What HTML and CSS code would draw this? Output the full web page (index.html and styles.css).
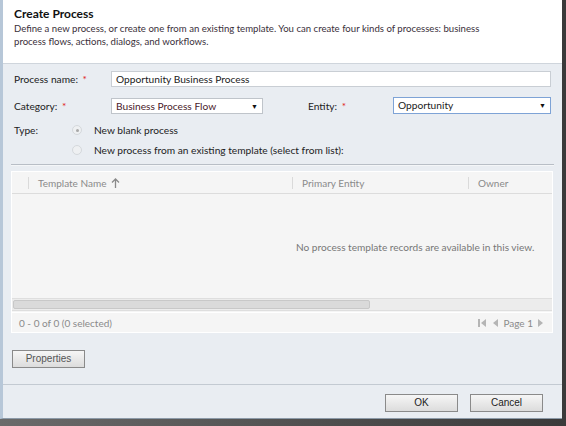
FILE: index.html
```html
<!DOCTYPE html>
<html>
<head>
<meta charset="utf-8">
<link rel="stylesheet" href="styles.css">
</head>
<body>
<div class="frame">
  <div class="dialog">
    <div class="header">
      <div class="title">Create Process</div>
      <div class="desc">Define a new process, or create one from an existing template. You can create four kinds of processes: business process flows, actions, dialogs, and workflows.</div>
    </div>
    <div class="body">
      <div class="row r-name">
        <div class="label">Process name: <span class="req">*</span></div>
        <div class="input wide">Opportunity Business Process</div>
      </div>
      <div class="row r-cat">
        <div class="label">Category: <span class="req">*</span></div>
        <div class="input select cat">Business Process Flow<span class="arrow">▼</span></div>
        <div class="label ent">Entity: <span class="req">*</span></div>
        <div class="input select entity">Opportunity<span class="arrow">▼</span></div>
      </div>
      <div class="row r-type">
        <div class="label">Type:</div>
        <div class="radio checked"></div>
        <div class="rtext">New blank process</div>
      </div>
      <div class="row r-type2">
        <div class="label"></div>
        <div class="radio"></div>
        <div class="rtext">New process from an existing template (select from list):</div>
      </div>
      <div class="sep"></div>
      <div class="grid">
        <div class="ghead">
          <div class="gcol c0"></div>
          <div class="gcol c1">Template Name <svg class="up" width="9" height="10" viewBox="0 0 9 10"><path d="M4.5 1 V10 M1 4.5 L4.5 1 L8 4.5" fill="none" stroke="#8a8a8a" stroke-width="1.3"/></svg></div>
          <div class="gcol c2">Primary Entity</div>
          <div class="gcol c3">Owner</div>
        </div>
        <div class="gbody">
          <div class="empty">No process template records are available in this view.</div>
        </div>
        <div class="hscroll"><div class="thumb"></div></div>
        <div class="gfoot">
          <div class="count">0 - 0 of 0 (0 selected)</div>
          <div class="pager">
            <svg width="10" height="10" viewBox="0 0 10 10"><rect x="1" y="1" width="2" height="8" fill="#b5b5b5"/><path d="M9 1 L4 5 L9 9 Z" fill="#b5b5b5"/></svg>
            <svg width="8" height="10" viewBox="0 0 8 10"><path d="M7 1 L2 5 L7 9 Z" fill="#b5b5b5"/></svg>
            <span class="page">Page 1</span>
            <svg width="8" height="10" viewBox="0 0 8 10"><path d="M1 1 L6 5 L1 9 Z" fill="#b5b5b5"/></svg>
          </div>
        </div>
      </div>
      <div class="props"><div class="btn small">Properties</div></div>
    </div>
    <div class="footer">
      <div class="btn">OK</div>
      <div class="btn">Cancel</div>
    </div>
  </div>
</div>
</body>
</html>
```
FILE: styles.css
```css
html, body { margin: 0; padding: 0; }
body { width: 566px; height: 426px; background: #5a5a5a; overflow: hidden; font-family: Lato, "Open Sans", sans-serif; }
.frame { width: 566px; height: 426px; background: linear-gradient(90deg, #6a6a6a, #3a3a3a); }
.dialog { width: 559px; height: 418px; background: #e9edf2; border-left: 3px solid #b7c7d8; border-bottom: 1px solid #8c9aa8; display: flex; flex-direction: column; box-sizing: content-box; }
.header { background: #fff; height: 64px; flex: none; border-bottom: 1px solid #cfd5dc; padding: 6px 0 0 11px; box-sizing: border-box; }
.title { font-weight: bold; font-size: 12px; color: #111; line-height: 15px; }
.desc { font-size: 9.6px; color: #3a2f3a; line-height: 12.5px; margin-top: 2px; width: 470px; }
.body { height: 321px; flex: none; padding: 0 8px; border-bottom: 1px solid #c3cad2; box-sizing: border-box; }
.row { display: flex; align-items: center; }
.label { font-size: 10.2px; color: #222; width: 100px; padding-left: 3px; box-sizing: border-box; }
.req { color: #e02020; margin-left: 2px; }
.r-name { margin-top: 7px; height: 16px; }
.input { background: #fff; border: 1px solid #c9ced4; height: 16px; box-sizing: border-box; font-size: 10.2px; color: #222; line-height: 14px; padding-left: 4px; position: relative; }
.wide { width: 440px; }
.r-cat { margin-top: 11px; height: 16px; }
.cat { width: 152px; color: #4a1a2a; border-color: #bfc4ca; }
.ent { width: 84px; margin-left: 42px; }
.entity { width: 158px; border: 1px solid #7ea3d6; height: 17px; margin-top: -1px; margin-left: 4px; }
.arrow { position: absolute; right: 4px; top: 0; font-size: 7px; color: #111; }
.r-type { margin-top: 9px; height: 14px; }
.r-type2 { margin-top: 6px; height: 14px; }
.r-type .label, .r-type2 .label { width: 61px; }
.radio { width: 10px; height: 10px; border-radius: 50%; border: 1px solid #d4d8dc; background: #eef0f2; box-sizing: border-box; position: relative; margin-right: 12px; }
.radio.checked::after { content: ""; position: absolute; left: 2.5px; top: 2.5px; width: 3px; height: 3px; border-radius: 50%; background: #a8a8a8; }
.rtext { font-size: 10.2px; color: #222; }
.sep { height: 0; border-top: 1px solid #b8bec6; border-bottom: 1px solid #f4f6f8; margin-top: 7px; }
.grid { margin: 5px 0 0 0; width: 542px; background: #f5f5f5; border: 1px solid #fff; box-sizing: border-box; }
.ghead { display: flex; height: 21px; border-bottom: 1px solid #dcdcdc; align-items: center; font-size: 10px; color: #8a8a8a; }
.gcol { height: 12px; line-height: 12px; border-left: 1px solid #dadada; padding-left: 9px; box-sizing: border-box; }
.c0 { width: 16px; border-left: none; padding: 0; }
.c1 { width: 264px; }
.c2 { width: 176px; }
.c3 { flex: 1; }
.up { vertical-align: -1px; margin-left: 2px; }
.gbody { height: 104px; position: relative; }
.empty { position: absolute; left: 284px; top: 47px; font-size: 10.1px; color: #777; white-space: nowrap; }
.hscroll { height: 13px; background: #ececec; border-top: 1px solid #dedede; border-bottom: 1px solid #dedede; padding: 2px 1px; box-sizing: border-box; }
.thumb { width: 357px; height: 9px; background: #dadada; border: 1px solid #c8c8c8; box-sizing: border-box; border-radius: 2px; margin-top: -1px; }
.gfoot { height: 19px; display: flex; align-items: center; justify-content: space-between; font-size: 10px; color: #8a8a8a; padding: 0 7px 0 7px; margin-top: 1px; border-top: 1px solid #fff; }
.pager { display: flex; align-items: center; gap: 4px; }
.page { color: #8a8a8a; }
.props { margin-top: 17px; margin-left: 1px; }
.btn { width: 73px; height: 18px; box-sizing: border-box; border: 1px solid #8a8a8a; background: linear-gradient(#f6f6f6, #dcdcdc); font-family: "Liberation Sans", Arial, sans-serif; font-size: 10px; color: #222; text-align: center; line-height: 16px; }
.small { color: #555; }
.footer { height: 33px; flex: none; display: flex; justify-content: flex-end; align-items: flex-start; gap: 12px; padding: 9px 19px 0 0; box-sizing: border-box; }
```
